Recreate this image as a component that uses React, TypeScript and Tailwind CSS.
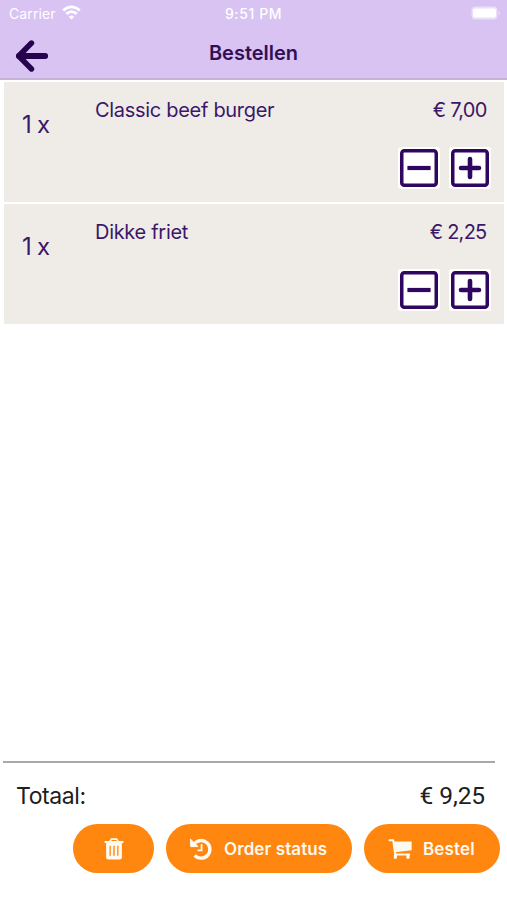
import React from "react";

function Minus() {
  return (
    <svg width="38" height="38" viewBox="0 0 38 38" fill="none" stroke="#300760" className="block">
      <rect x="1.75" y="1.75" width="34.5" height="34.5" rx="2.5" strokeWidth="3.5" />
      <path d="M9.5 19h19" strokeWidth="4.2" strokeLinecap="square" strokeLinejoin="round" />
    </svg>
  );
}

function Plus() {
  return (
    <svg width="38" height="38" viewBox="0 0 38 38" fill="none" stroke="#300760" className="block">
      <rect x="1.75" y="1.75" width="34.5" height="34.5" rx="2.5" strokeWidth="3.5" />
      <path d="M10 19h18M19 10v18" strokeWidth="4.6" strokeLinecap="round" />
    </svg>
  );
}

type ItemProps = { name: string; price: string };

function OrderItem({ name, price }: ItemProps) {
  return (
    <li className="flex h-[120px] bg-[#efece8] text-[#3b1769]">
      <div className="w-[91px] pl-[18px] pt-[28px] text-[24px] leading-[30px] tracking-[-0.8px]">1 x</div>
      <div className="flex-1 whitespace-nowrap pt-[14px] text-[20px] leading-[28px] tracking-[-0.3px]">{name}</div>
      <div className="flex flex-col items-end pr-[13.5px] pt-[14px]">
        <span className="pr-1 text-[20px] leading-[28px] tracking-[-0.75px]">{price}</span>
        <div className="mt-[22.6px] flex gap-[8.5px]">
          <button className="rounded-[3px] bg-white p-[2px]" aria-label="Minder"><Minus /></button>
          <button className="rounded-[3px] bg-white p-[2px]" aria-label="Meer"><Plus /></button>
        </div>
      </div>
    </li>
  );
}

export default function App() {
  return (
    <div className="flex h-[900px] w-[507px] flex-col overflow-hidden bg-white font-['Inter',sans-serif]">
      <header className="h-20 border-b-2 border-[#c4b4d5] bg-[#d8c3f3]">
        <div className="grid h-7 grid-cols-3 items-center text-[14px] text-white">
          <div className="flex items-center gap-[6px] pl-[9px]">
            <span className="-mt-[2px] tracking-[0.1px]">Carrier</span>
            <svg width="19" height="15" viewBox="0 0 19 15" fill="none" stroke="#fff" strokeWidth="2.8" className="-mt-[3px]">
              <path d="M1.2 5.5Q9.5-1.8 17.8 5.5" />
              <path d="M4.3 8.9Q9.5 4.3 14.7 8.9" />
              <path d="M6.7 11.7Q9.5 9.2 12.3 11.7L9.5 14.4Z" fill="#fff" stroke="none" />
            </svg>
          </div>
          <div className="-mt-[2px] text-center font-medium tracking-[0.6px]">9:51 PM</div>
          <div className="flex justify-end pr-[6px]">
            <svg width="30" height="15" viewBox="0 0 30 15" className="-mt-px">
              <rect x="0.5" y="0.5" width="26" height="13" rx="4" fill="#eadff9" />
              <rect x="2" y="2.5" width="23" height="9" rx="2" fill="#fff" />
              <path d="M27.8 4.7q2.2 2.3 0 4.6z" fill="#eadff9" />
            </svg>
          </div>
        </div>
        <div className="grid h-[50px] grid-cols-[1fr_auto_1fr] items-center">
          <button className="pl-[14.5px] pt-[5px]" aria-label="Terug">
            <svg width="34" height="34" viewBox="0 0 34 34" fill="none" stroke="#26044d" strokeLinecap="round" strokeLinejoin="round" className="block">
              <path d="M16.5 4L3.7 17L16.5 30" strokeWidth="5.4" />
              <path d="M4 17H30.2" strokeWidth="5.8" />
            </svg>
          </button>
          <h1 className="-mt-px text-[20px] font-semibold leading-[28px] text-[#300f58]">Bestellen</h1>
        </div>
      </header>
      <ul className="flex flex-1 flex-col gap-[2px] pl-1 pr-[3px] pt-[2px]">
        <OrderItem name="Classic beef burger" price="€ 7,00" />
        <OrderItem name="Dikke friet" price="€ 2,25" />
      </ul>
      <footer className="h-[139px]">
        <div className="ml-[3px] mr-3 border-t-2 border-[#a7a9aa]" />
        <div className="flex h-[61px] items-center justify-between pl-4 pr-[22px] pt-[5px] text-[#202020]">
          <span className="pt-px text-[23px] tracking-[-0.4px]">Totaal:</span>
          <span className="font-['Roboto',sans-serif] text-[24.5px] tracking-[-0.1px]">€ 9,25</span>
        </div>
        <div className="flex justify-end gap-3 pr-[7px] text-[17px] font-semibold text-[#fffaf0]">
          <button className="flex h-[49px] w-[81px] items-center justify-center rounded-full bg-[#ff860f]" aria-label="Wissen">
            <svg width="20" height="22" viewBox="0 0 20 22" fill="currentColor" fillRule="evenodd">
              <path d="M5.2 3.1L6.2 1.2Q6.6.3 7.4.3h5.2q.8 0 1.2.9l1 1.9h4.1q.6 0 .6.6v.8q0 .6-.6.6H1.1q-.6 0-.6-.6v-.8q0-.6.6-.6zM7.2 3.1h5.6l-.6-1H7.8z" />
              <path d="M2.1 5h15.8v14.3q0 2.2-2.2 2.2H4.3q-2.2 0-2.2-2.2zM5.5 7.8v10h1.3v-10zM9.3 7.8v10h1.4v-10zM13.2 7.8v10h1.3v-10z" />
            </svg>
          </button>
          <button className="flex h-[49px] w-[186px] items-center rounded-full bg-[#ff860f] pl-6">
            <svg width="22" height="22" viewBox="0 0 22 22" fill="none" stroke="currentColor">
              <path d="M4.3 5.8A8.8 8.8 0 1 1 4.7 17.4" strokeWidth="3.4" />
              <path d="M.5 1.2L.7 8.6h7.4z" fill="currentColor" strokeWidth="1" strokeLinejoin="round" />
              <path d="M11.6 6.8v5.5H8.2" strokeWidth="1.8" strokeLinecap="round" />
            </svg>
            <span className="ml-3 whitespace-nowrap pt-[2px] tracking-[0.1px]">Order status</span>
          </button>
          <button className="flex h-[49px] w-[136px] items-center rounded-full bg-[#ff860f] pl-6">
            <svg width="24" height="22" viewBox="0 0 24 22" fill="none" stroke="currentColor">
              <path d="M1.4 2.2h3.8L7.2 16.5h14" strokeWidth="2" strokeLinecap="round" strokeLinejoin="round" />
              <path d="M5.2 3.4H23.6v8.8L7.2 14.2z" fill="currentColor" stroke="none" />
              <rect x="5.8" y="16.8" width="3.2" height="4" rx="1" fill="currentColor" stroke="none" />
              <rect x="18.4" y="16.8" width="3.2" height="4" rx="1" fill="currentColor" stroke="none" />
            </svg>
            <span className="ml-[11px] pt-[2px] tracking-[0.15px]">Bestel</span>
          </button>
        </div>
      </footer>
    </div>
  );
}
